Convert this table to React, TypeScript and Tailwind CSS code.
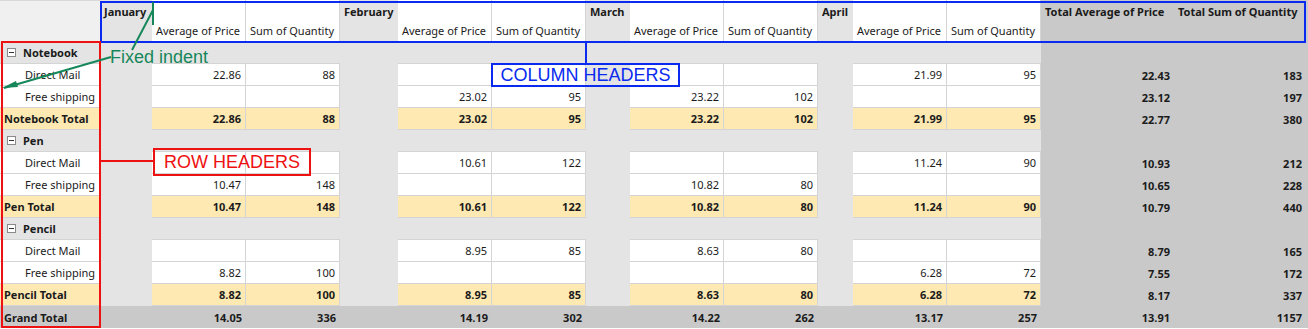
import React from "react";

type Pair = [string, string] | null;

type Row =
  | { kind: "group"; label: string }
  | { kind: "item" | "total" | "grand"; label: string; cells: Pair[]; totals: [string, string] };

const months = [
  { name: "January" },
  { name: "February" },
  { name: "March" },
  { name: "April" },
];

const rows: Row[] = [
  { kind: "group", label: "Notebook" },
  { kind: "item", label: "Direct Mail", cells: [["22.86", "88"], null, null, ["21.99", "95"]], totals: ["22.43", "183"] },
  { kind: "item", label: "Free shipping", cells: [null, ["23.02", "95"], ["23.22", "102"], null], totals: ["23.12", "197"] },
  { kind: "total", label: "Notebook Total", cells: [["22.86", "88"], ["23.02", "95"], ["23.22", "102"], ["21.99", "95"]], totals: ["22.77", "380"] },
  { kind: "group", label: "Pen" },
  { kind: "item", label: "Direct Mail", cells: [null, ["10.61", "122"], null, ["11.24", "90"]], totals: ["10.93", "212"] },
  { kind: "item", label: "Free shipping", cells: [["10.47", "148"], null, ["10.82", "80"], null], totals: ["10.65", "228"] },
  { kind: "total", label: "Pen Total", cells: [["10.47", "148"], ["10.61", "122"], ["10.82", "80"], ["11.24", "90"]], totals: ["10.79", "440"] },
  { kind: "group", label: "Pencil" },
  { kind: "item", label: "Direct Mail", cells: [null, ["8.95", "85"], ["8.63", "80"], null], totals: ["8.79", "165"] },
  { kind: "item", label: "Free shipping", cells: [["8.82", "100"], null, null, ["6.28", "72"]], totals: ["7.55", "172"] },
  { kind: "total", label: "Pencil Total", cells: [["8.82", "100"], ["8.95", "85"], ["8.63", "80"], ["6.28", "72"]], totals: ["8.17", "337"] },
  { kind: "grand", label: "Grand Total", cells: [["14.05", "336"], ["14.19", "302"], ["14.22", "262"], ["13.17", "257"]], totals: ["13.91", "1157"] },
];

const MinusBox = () => (
  <span className="mr-[7px] ml-[7px] inline-flex h-[9px] w-[9px] items-center justify-center border border-[#8a8a8a] bg-white">
    <span className="h-px w-[5px] bg-[#333]" />
  </span>
);

function rowCells(row: Row, r: number) {
  if (row.kind === "group") {
    const out = [
      <div key={`h${r}`} className="flex items-center border-b border-[#d4d4d4] bg-[#e4e4e4] font-bold">
        <MinusBox />
        {row.label}
      </div>,
    ];
    months.forEach((_, m) => {
      out.push(<div key={`m${r}${m}`} className="bg-[#e4e4e4]" />);
      out.push(<div key={`a${r}${m}`} className="border-b border-[#d4d4d4] bg-[#e4e4e4]" />);
      out.push(<div key={`s${r}${m}`} className="border-b border-[#d4d4d4] bg-[#e4e4e4]" />);
    });
    out.push(<div key={`ta${r}`} className="bg-[#c9c9c9]" />);
    out.push(<div key={`ts${r}`} className="bg-[#c9c9c9]" />);
    return out;
  }

  const grand = row.kind === "grand";
  const total = row.kind === "total";
  const headCls = grand
    ? "bg-[#c9c9c9] font-bold pl-[4px]"
    : total
      ? "bg-[#fee9b3] font-bold pl-[4px] border-b border-[#d4d4d4]"
      : "bg-white pl-[25px] border-b border-[#d4d4d4]";
  const dataCls = grand
    ? "bg-[#c9c9c9] font-bold"
    : total
      ? "bg-[#fee9b3] font-bold border-b border-r border-[#d4d4d4]"
      : "bg-white border-b border-r border-[#d4d4d4]";

  const out = [
    <div key={`h${r}`} className={`flex items-center whitespace-nowrap ${headCls}`}>
      {row.label}
    </div>,
  ];
  row.cells.forEach((c, m) => {
    out.push(<div key={`m${r}${m}`} className={grand ? "bg-[#c9c9c9]" : "bg-[#e4e4e4]"} />);
    out.push(
      <div key={`a${r}${m}`} className={`flex items-center justify-end pr-[4px] ${dataCls}`}>
        {c ? c[0] : ""}
      </div>
    );
    out.push(
      <div key={`s${r}${m}`} className={`flex items-center justify-end pr-[4px] ${dataCls}`}>
        {c ? c[1] : ""}
      </div>
    );
  });
  out.push(
    <div key={`ta${r}`} className="flex items-center justify-end bg-[#c9c9c9] pr-[4px] font-bold">
      {row.totals[0]}
    </div>
  );
  out.push(
    <div key={`ts${r}`} className="flex items-center justify-end bg-[#c9c9c9] pr-[6px] font-bold">
      {row.totals[1]}
    </div>
  );
  return out;
}

export default function App() {
  return (
    <div className="relative h-[329px] w-[1308px] overflow-hidden bg-white font-['Noto_Sans',sans-serif] text-[11px] text-[#1b1b1b]">
      <div className="grid grid-cols-[100px_52px_94px_94px_58px_94px_94px_44px_94px_94px_35px_94px_94px_133px_1fr] grid-rows-[42px_repeat(13,22px)] leading-none">
        <div className="border-t border-[#d8d8d8] bg-[#f0f0f0]" />
        {months.map((m) => (
          <React.Fragment key={m.name}>
            <div className="bg-[#e4e4e4] pl-[4px] pt-[6px] font-bold">{m.name}</div>
            <div className="flex items-end border-r border-[#d4d4d4] bg-white pb-[6px] pl-[4px] whitespace-nowrap">
              Average of Price
            </div>
            <div className="flex items-end border-r border-[#d4d4d4] bg-white pb-[6px] pl-[4px] whitespace-nowrap">
              Sum of Quantity
            </div>
          </React.Fragment>
        ))}
        <div className="bg-[#c9c9c9] pl-[4px] pt-[6px] font-bold whitespace-nowrap">Total Average of Price</div>
        <div className="bg-[#c9c9c9] pl-[4px] pt-[6px] font-bold whitespace-nowrap">Total Sum of Quantity</div>
        {rows.map((row, r) => rowCells(row, r))}
      </div>

      {/* annotations */}
      <div className="absolute left-[100px] top-[1px] h-[42px] w-[1206px] border-2 border-[#0a2af0]" />
      <div className="absolute left-[1px] top-[41px] h-[287px] w-[100px] border-2 border-[#ee1111]" />

      <svg className="absolute left-0 top-0" width="1308" height="329">
        <line x1="586" y1="42" x2="586" y2="64" stroke="#0a2af0" strokeWidth="2" />
        <line x1="100" y1="161" x2="154" y2="161" stroke="#ee1111" strokeWidth="2" />
        <line x1="153" y1="2" x2="153" y2="25" stroke="#16875a" strokeWidth="2" />
        <line x1="153" y1="10" x2="132" y2="50" stroke="#16875a" strokeWidth="2" />
        <line x1="111" y1="57" x2="4" y2="88" stroke="#16875a" strokeWidth="2" />
        <polygon points="2,88 16,81 18,87" fill="#16875a" />
      </svg>

      <div className="absolute left-[110px] top-[48px] font-['Liberation_Sans',sans-serif] text-[18px] leading-[18px] text-[#16875a]">
        Fixed indent
      </div>
      <div className="absolute left-[491px] top-[63px] flex h-[24px] w-[189px] items-center justify-center border-2 border-[#0a2af0] font-['Liberation_Sans',sans-serif] text-[18px] leading-none text-[#0a2af0]">
        COLUMN HEADERS
      </div>
      <div className="absolute left-[153px] top-[148px] flex h-[28px] w-[158px] items-center justify-center border-2 border-[#ee1111] font-['Liberation_Sans',sans-serif] text-[18px] leading-none text-[#ee1111]">
        ROW HEADERS
      </div>
    </div>
  );
}
